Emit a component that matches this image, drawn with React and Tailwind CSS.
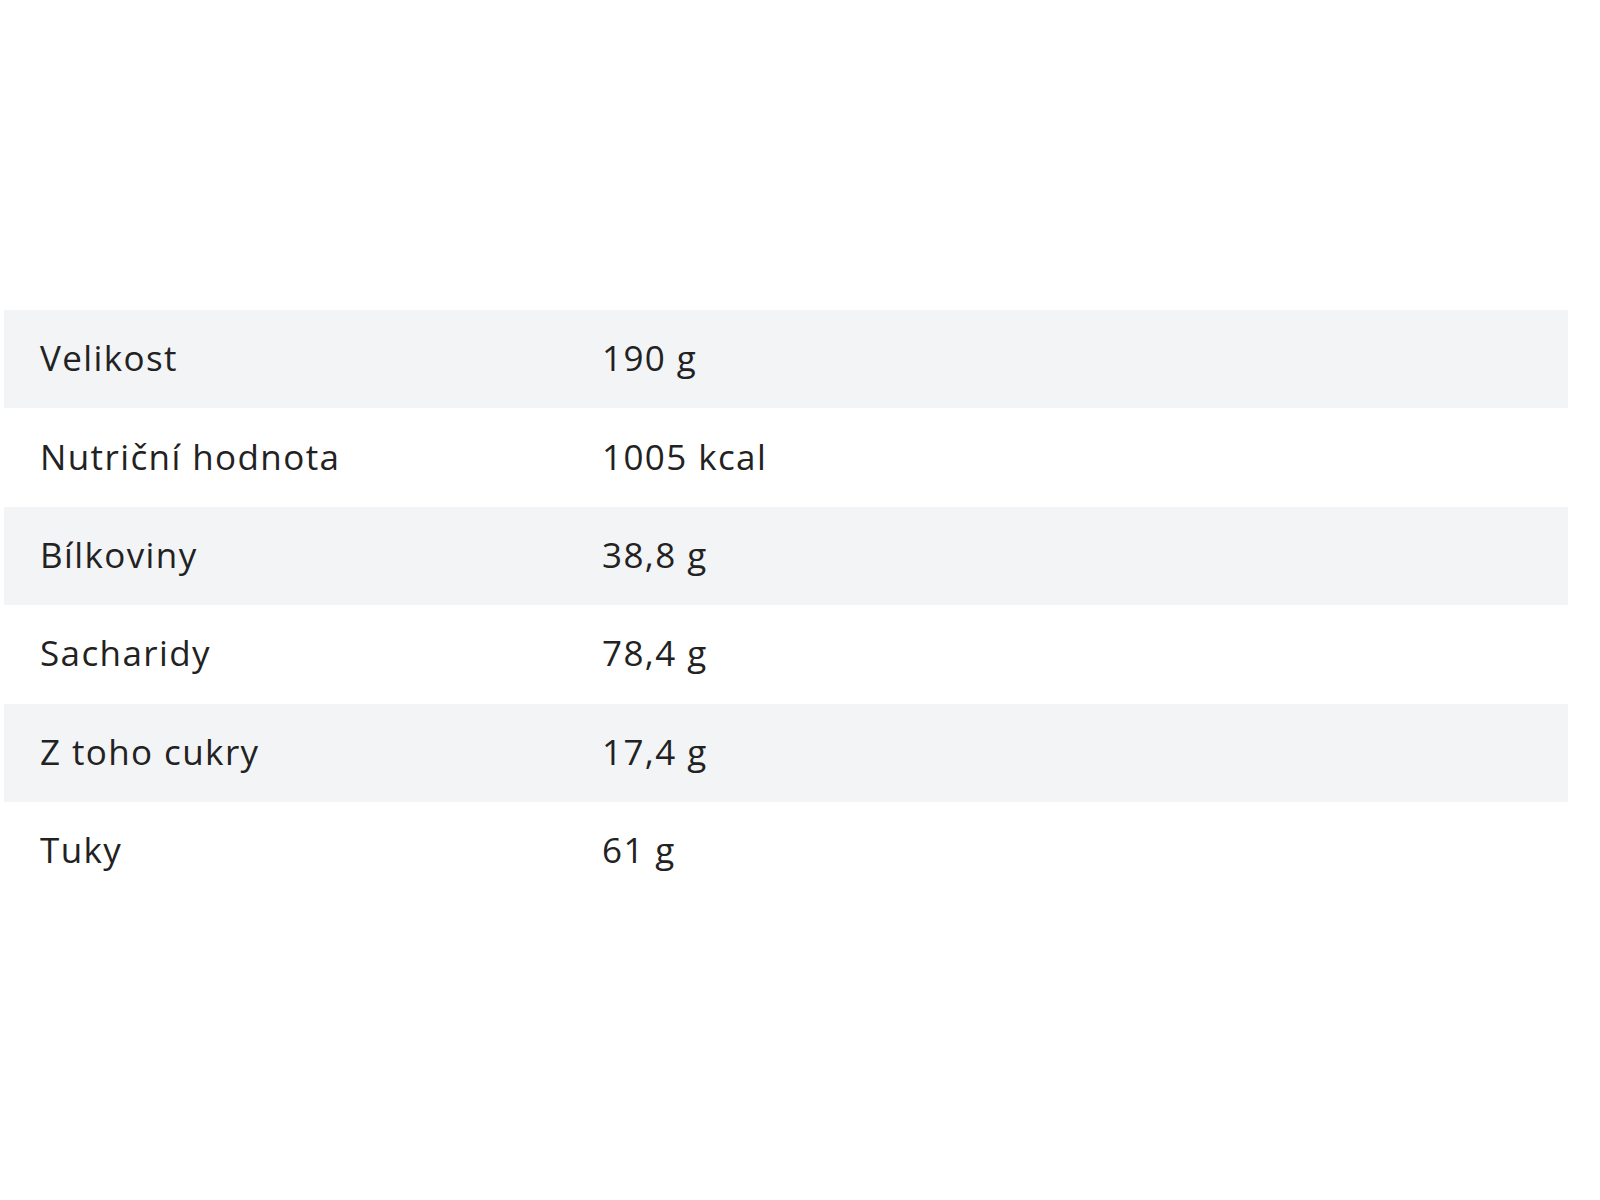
const rows = [
  ['Velikost', '190 g'],
  ['Nutriční hodnota', '1005 kcal'],
  ['Bílkoviny', '38,8 g'],
  ['Sacharidy', '78,4 g'],
  ['Z toho cukry', '17,4 g'],
  ['Tuky', '61 g'],
]

export default function App() {
  return (
    <div className="w-[1600px] h-[1200px] bg-white pt-[310px] pl-[4px] pr-[32px]" style={{ fontFamily: '"Open Sans", "Noto Sans", sans-serif' }}>
      <div className="flex flex-col">
        {rows.map(([label, value], i) => (
          <div
            key={label}
            className={`grid grid-cols-[598px_1fr] items-center h-[98.4px] text-[35px] leading-none tracking-[1.4px] text-[#222222] ${i % 2 === 0 ? 'bg-[#f2f4f6]' : 'bg-white'}`}
          >
            <div className="pl-[36px] -mt-[3px]">{label}</div>
            <div className="-mt-[3px]">{value}</div>
          </div>
        ))}
      </div>
    </div>
  )
}
